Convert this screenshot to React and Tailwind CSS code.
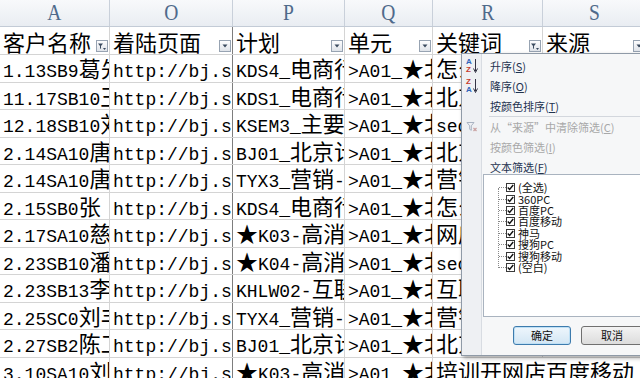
import React from "react";

const CJK = /[\u2E80-\u9FFF\uFF00-\uFFEF\u2605\u3000-\u303F\u201C\u201D]/;

function Runs({ text }) {
  const parts = [];
  let cur = "";
  let curCjk = null;
  for (const ch of text) {
    const c = CJK.test(ch);
    if (curCjk === null || c === curCjk) {
      cur += ch;
    } else {
      parts.push([cur, curCjk]);
      cur = ch;
    }
    curCjk = c;
  }
  if (cur) parts.push([cur, curCjk]);
  return parts.map(([t, c], i) =>
    c ? (
      <span key={i} className="text-[22px] font-['Noto_Sans_CJK_SC',sans-serif]">
        {t}
      </span>
    ) : (
      <span key={i} className="text-[18px] leading-[18px] font-['Liberation_Mono',monospace]">
        {t}
      </span>
    )
  );
}

const widths = ["w-[110px]", "w-[123px]", "w-[112px]", "w-[88px]", "w-[110px]", "w-[103px]"];
const rightBorders = [
  "border-r border-[#d4d4d4]",
  "border-r border-[#7d7d7d]",
  "border-r border-[#d4d4d4]",
  "border-r border-[#d4d4d4]",
  "border-r border-[#d4d4d4]",
  "",
];

const letters = ["A", "O", "P", "Q", "R", "S"];
const headers = ["客户名称", "着陆页面", "计划", "单元", "关键词", "来源"];
const filtered = [true, false, false, false, true, false];

const rows = [
  ["1.13SB9葛先生", "http://bj.sina.com", "KDS4_电商行业", ">A01_★北京", "怎么开网店"],
  ["11.17SB10王女士", "http://bj.sohu.com", "KDS1_电商行业", ">A01_★北京", "北京开网店"],
  ["12.18SB10刘先生", "http://bj.sina.com", "KSEM3_主要词", ">A01_★北京", "seo培训"],
  ["2.14SA10唐先生", "http://bj.sohu.com", "BJ01_北京计划", ">A01_★北京", "北京开网店"],
  ["2.14SA10唐先生", "http://bj.sTmall.com", "TYX3_营销-推广", ">A01_★北京", "营销培训"],
  ["2.15SB0张 先生", "http://bj.sohu.com", "KDS4_电商行业", ">A01_★北京", "怎么开网店"],
  ["2.17SA10慈先生", "http://bj.sina.com", "★K03-高消费", ">A01_★北京", "网店培训"],
  ["2.23SB10潘先生", "http://bj.sina.com", "★K04-高消费", ">A01_★北京", "seo培训"],
  ["2.23SB13李先生", "http://bj.sohu.com", "KHLW02-互联网", ">A01_★北京", "互联网培训"],
  ["2.25SC0刘丰", "http://bj.sTmall.com", "TYX4_营销-推广", ">A01_★北京", "营销培训"],
  ["2.27SB2陈工", "http://bj.sohu.com", "BJ01_北京计划", ">A01_★北京", "北京开网店"],
  ["3.10SA10刘先生", "http://bj.sina.com", "★K03-高消费", ">A01_★北京", "培训开网店百度移动"],
];

function DropBtn({ isFiltered }) {
  return (
    <div className="absolute right-[1px] bottom-[2px] w-[12px] h-[12px] border border-[#97a3b2] bg-[linear-gradient(#fdfdfe,#dfe3e9)] flex items-center justify-center">
      {isFiltered ? (
        <svg width="10" height="9" viewBox="0 0 10 9">
          <path d="M1 1.5h5l-2 2.5v3l-1 -0.8v-2.2z" fill="#3a4a5e" />
          <path d="M6 6h3l-1.5 2z" fill="#3a4a5e" />
        </svg>
      ) : (
        <svg width="6" height="4" viewBox="0 0 6 4">
          <path d="M0.5 0.5h5l-2.5 3z" fill="#3a4a5e" />
        </svg>
      )}
    </div>
  );
}

function Arrow() {
  return (
    <svg width="4" height="7" viewBox="0 0 4 7" className="ml-auto mr-[6px]">
      <path d="M0 0l4 3.5L0 7z" fill="#333" />
    </svg>
  );
}

function SortIcon({ asc }) {
  const top = asc ? "A" : "Z";
  const bottom = asc ? "Z" : "A";
  return (
    <div className="flex items-center gap-[1px]">
      <div className="flex flex-col leading-[8px] text-[8px] font-bold font-['Liberation_Sans',sans-serif]">
        <span className={asc ? "text-[#2f63b8]" : "text-[#c6392c]"}>{top}</span>
        <span className={asc ? "text-[#c6392c]" : "text-[#2f63b8]"}>{bottom}</span>
      </div>
      <svg width="5" height="14" viewBox="0 0 5 14">
        <path d="M2.5 0v12M0.5 9.5l2 4 2-4" stroke="#334" strokeWidth="1" fill="none" />
      </svg>
    </div>
  );
}

function ClearIcon() {
  return (
    <svg width="12" height="12" viewBox="0 0 12 12">
      <path d="M1 1.5h7l-2.7 3.3v4.5l-1.6 -1v-3.5z" fill="none" stroke="#a9b3c2" strokeWidth="1" />
      <path d="M7.5 7l3 3M10.5 7l-3 3" stroke="#c9a0a0" strokeWidth="1.2" />
    </svg>
  );
}

function MenuItem({ icon, label, accel, gray, arrow }) {
  return (
    <div className="flex items-center h-[20px]">
      <div className="w-[20px] flex items-center justify-center">{icon}</div>
      <div
        className={
          "pl-[8px] text-[11px] leading-none font-['Noto_Sans_CJK_SC',sans-serif] " +
          (gray ? "text-[#a8a8a8]" : "text-[#1f3350]")
        }
      >
        {label}(<span className="underline">{accel}</span>)
      </div>
      {arrow ? <Arrow /> : null}
    </div>
  );
}

const checkItems = ["(全选)", "360PC", "百度PC", "百度移动", "神马", "搜狗PC", "搜狗移动", "(空白)"];

function Check() {
  return (
    <div className="w-[9px] h-[9px] border border-[#3a3a3a] bg-white flex items-center justify-center">
      <svg width="7" height="7" viewBox="0 0 7 7">
        <path d="M0.8 3.6l1.8 1.9L6.2 1" stroke="#111" strokeWidth="1.4" fill="none" />
      </svg>
    </div>
  );
}

function FilterPanel() {
  return (
    <div className="absolute left-[461px] top-[53px] w-[200px] h-[303px] border border-[#8f9aa7] shadow-[2px_2px_4px_rgba(0,0,0,0.35)] bg-[linear-gradient(to_right,#eef0f3_19px,#d8dce2_19px,#d8dce2_20px,#f6f7f8_20px)] flex flex-col pt-[2px]">
      <MenuItem icon={<SortIcon asc />} label="升序" accel="S" />
      <MenuItem icon={<SortIcon />} label="降序" accel="O" />
      <MenuItem label="按颜色排序" accel="T" arrow />
      <div className="h-px ml-[27px] bg-[#d3d7dd]" />
      <MenuItem icon={<ClearIcon />} label="从“来源”中清除筛选" accel="C" gray />
      <MenuItem label="按颜色筛选" accel="I" gray arrow />
      <MenuItem label="文本筛选" accel="F" arrow />
      <div className="relative ml-[21px] mt-[-3px] w-[180px] h-[143px] bg-white border border-[#a9b3bf] pt-[7px]">
        <div className="absolute left-[14px] top-[13px] h-[80px] border-l border-dotted border-[#8a8a8a]" />
        {checkItems.map((t) => (
          <div key={t} className="flex items-center h-[11.4px]">
            <div className="w-[15px]" />
            <div className="w-[7px] border-t border-dotted border-[#8a8a8a]" />
            <Check />
            <div className="ml-[3px] text-[11px] leading-none text-[#111] font-['Noto_Sans_CJK_SC',sans-serif]">
              {t}
            </div>
          </div>
        ))}
      </div>
      <div className="flex mt-[9px] ml-[51px] gap-[10px]">
        <div className="w-[58px] h-[19px] rounded-[3px] border border-[#3d7bad] bg-[linear-gradient(#eef6fc,#d3e6f4)] flex items-center justify-center text-[11px] text-[#111] font-['Noto_Sans_CJK_SC',sans-serif] shadow-[inset_0_0_0_1px_#bfe0f5]">
          确定
        </div>
        <div className="w-[62px] h-[19px] rounded-[3px] border border-[#707070] bg-[linear-gradient(#f3f3f3,#dcdcdc)] flex items-center justify-center text-[11px] text-[#111] font-['Noto_Sans_CJK_SC',sans-serif]">
          取消
        </div>
      </div>
    </div>
  );
}

export default function App() {
  return (
    <div className="relative w-[640px] h-[378px] overflow-hidden bg-white">
      {/* column letters */}
      <div className="flex h-[27px] bg-[linear-gradient(#f8f9fb,#e9edf2)] border-b border-[#c3cbd6]">
        {letters.map((l, i) => (
          <div
            key={l}
            className={
              widths[i] +
              " shrink-0 flex items-center justify-center border-r border-[#c9d0da] text-[23px] text-[#4f6a8b] font-['Liberation_Serif',serif]"
            }
          >
            <span className="inline-block scale-x-[0.85]">{l}</span>
          </div>
        ))}
      </div>
      {/* header row */}
      <div className="flex h-[28px] border-b border-[#d4d4d4]">
        {headers.map((h, i) => (
          <div
            key={h}
            className={
              widths[i] +
              " " +
              rightBorders[i] +
              " shrink-0 relative overflow-hidden whitespace-nowrap pl-[3px] leading-[29px] text-[22px] text-black font-['Noto_Sans_CJK_SC',sans-serif]"
            }
          >
            {h}
            <DropBtn isFiltered={filtered[i]} />
          </div>
        ))}
      </div>
      {/* data rows */}
      {rows.map((r, ri) => {
        const last = ri === rows.length - 1;
        return (
          <div key={ri} className="flex h-[27.5px] border-b border-[#d4d4d4]">
            {r.map((c, ci) => (
              <div
                key={ci}
                className={
                  widths[ci] +
                  " " +
                  (last && ci === 4 ? "" : rightBorders[ci]) +
                  " shrink-0 whitespace-nowrap pl-[3px] leading-[24px] text-[22px] text-black font-['Noto_Sans_CJK_SC',sans-serif] " +
                  (last && ci === 4 ? "overflow-visible relative z-10" : "overflow-hidden")
                }
              >
                <Runs text={c} />
              </div>
            ))}
            <div className={widths[5] + " shrink-0"} />
          </div>
        );
      })}
      <FilterPanel />
    </div>
  );
}
